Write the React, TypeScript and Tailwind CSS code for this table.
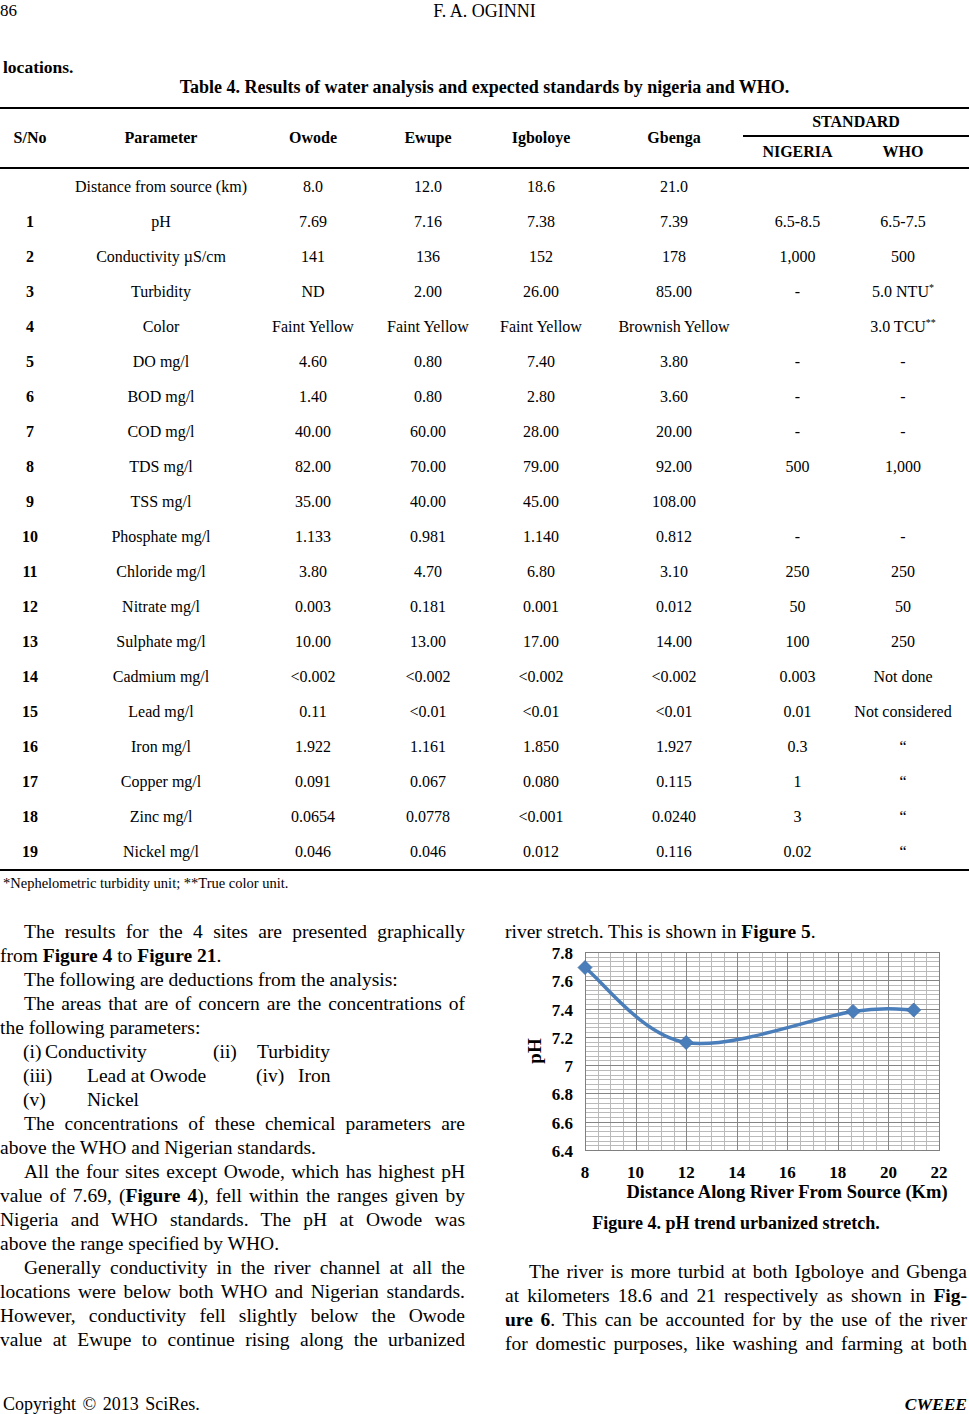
import type { ReactNode } from "react"

const rows: string[][] = [
  ["", "Distance from source (km)", "8.0", "12.0", "18.6", "21.0", "", ""],
  ["1", "pH", "7.69", "7.16", "7.38", "7.39", "6.5-8.5", "6.5-7.5"],
  ["2", "Conductivity µS/cm", "141", "136", "152", "178", "1,000", "500"],
  ["3", "Turbidity", "ND", "2.00", "26.00", "85.00", "-", "NTU"],
  ["4", "Color", "Faint Yellow", "Faint Yellow", "Faint Yellow", "Brownish Yellow", "", "TCU"],
  ["5", "DO mg/l", "4.60", "0.80", "7.40", "3.80", "-", "-"],
  ["6", "BOD mg/l", "1.40", "0.80", "2.80", "3.60", "-", "-"],
  ["7", "COD mg/l", "40.00", "60.00", "28.00", "20.00", "-", "-"],
  ["8", "TDS mg/l", "82.00", "70.00", "79.00", "92.00", "500", "1,000"],
  ["9", "TSS mg/l", "35.00", "40.00", "45.00", "108.00", "", ""],
  ["10", "Phosphate mg/l", "1.133", "0.981", "1.140", "0.812", "-", "-"],
  ["11", "Chloride mg/l", "3.80", "4.70", "6.80", "3.10", "250", "250"],
  ["12", "Nitrate mg/l", "0.003", "0.181", "0.001", "0.012", "50", "50"],
  ["13", "Sulphate mg/l", "10.00", "13.00", "17.00", "14.00", "100", "250"],
  ["14", "Cadmium mg/l", "<0.002", "<0.002", "<0.002", "<0.002", "0.003", "Not done"],
  ["15", "Lead mg/l", "0.11", "<0.01", "<0.01", "<0.01", "0.01", "Not considered"],
  ["16", "Iron mg/l", "1.922", "1.161", "1.850", "1.927", "0.3", "“"],
  ["17", "Copper mg/l", "0.091", "0.067", "0.080", "0.115", "1", "“"],
  ["18", "Zinc mg/l", "0.0654", "0.0778", "<0.001", "0.0240", "3", "“"],
  ["19", "Nickel mg/l", "0.046", "0.046", "0.012", "0.116", "0.02", "“"],
]

const cols = "grid grid-cols-[60px_202px_102px_128px_98px_168px_79px_132px]"

function renderValue(v: string) {
  if (v === "NTU")
    return (
      <span>
        5.0 NTU<span className="relative -top-[6px] text-[10px] leading-none">*</span>
      </span>
    )
  if (v === "TCU")
    return (
      <span>
        3.0 TCU<span className="relative -top-[6px] text-[10px] leading-none">**</span>
      </span>
    )
  return <span>{v}</span>
}

// justified line of running text
function J({ children, indent }: { children: ReactNode; indent?: boolean }) {
  return (
    <div className={indent ? "indent-[24px] text-justify [text-align-last:justify]" : "text-justify [text-align-last:justify]"}>
      {children}
    </div>
  )
}

function L({ children, indent }: { children: ReactNode; indent?: boolean }) {
  return <div className={indent ? "indent-[24px] whitespace-nowrap" : "whitespace-nowrap"}>{children}</div>
}

function PhChart() {
  const X0 = 80
  const X1 = 434
  const Y0 = 8
  const Y1 = 206
  const xs = (km: number) => X0 + ((km - 8) * (X1 - X0)) / 14
  const ys = (ph: number) => Y0 + ((7.8 - ph) * (Y1 - Y0)) / 1.4
  const px = (v: number) => Math.round(v) + 0.5

  const minorV = Array.from({ length: 29 }, (_, i) => 8 + i * 0.5)
  const minorH = Array.from({ length: 43 }, (_, i) => 7.8 - (i * 0.2) / 6)
  const majorV = [8, 10, 12, 14, 16, 18, 20, 22]
  const majorH = [7.8, 7.6, 7.4, 7.2, 7, 6.8, 6.6, 6.4]
  const pts: [number, number][] = [
    [8, 7.69],
    [12, 7.16],
    [18.6, 7.38],
    [21, 7.39],
  ]

  return (
    <svg width="462" height="262" viewBox="0 0 462 262" className="block">
      <rect x={X0} y={Y0} width={X1 - X0} height={Y1 - Y0} fill="#ffffff" />
      {minorV.map((k) => (
        <line key={"mv" + k} x1={px(xs(k))} x2={px(xs(k))} y1={Y0} y2={Y1} stroke="#bababa" strokeWidth="1" />
      ))}
      {minorH.map((p, i) => (
        <line key={"mh" + i} x1={X0} x2={X1} y1={px(ys(p))} y2={px(ys(p))} stroke="#bababa" strokeWidth="1" />
      ))}
      {majorV.map((k) => (
        <line key={"v" + k} x1={px(xs(k))} x2={px(xs(k))} y1={Y0} y2={Y1} stroke="#858585" strokeWidth="1" />
      ))}
      {majorH.map((p) => (
        <line key={"h" + p} x1={X0} x2={X1} y1={px(ys(p))} y2={px(ys(p))} stroke="#858585" strokeWidth="1" />
      ))}
      <rect x={X0 + 0.5} y={Y0 + 0.5} width={X1 - X0} height={Y1 - Y0} fill="none" stroke="#808080" strokeWidth="1" />

      <path
        d="M80,23.56 C96.86,36.05 136.47,91.2 181.14,98.51 C225.81,105.82 310.1,72.82 348.03,67.4 C385.96,61.98 398.6,66.22 408.71,65.99"
        fill="none"
        stroke="#4a7ebb"
        strokeWidth="3.5"
        strokeLinecap="round"
      />
      {pts.map(([k, p]) => {
        const x = xs(k)
        const y = ys(p)
        return (
          <polygon
            key={"pt" + k}
            points={`${x},${y - 7} ${x + 7},${y} ${x},${y + 7} ${x - 7},${y}`}
            fill="#4a7ebb"
            stroke="#3f6fa8"
            strokeWidth="0.8"
          />
        )
      })}

      <g fontFamily="'Liberation Serif', serif" fontWeight="bold" fill="#000">
        {majorH.map((p) => (
          <text key={"yl" + p} x="68" y={ys(p) + 7} fontSize="17" textAnchor="end">
            {p === 7 ? "7" : p.toFixed(1)}
          </text>
        ))}
        {majorV.map((k) => (
          <text key={"xl" + k} x={xs(k)} y="234" fontSize="17" textAnchor="middle">
            {k}
          </text>
        ))}
        <text x="282" y="254" fontSize="18.5" textAnchor="middle">
          Distance Along River From Source (Km)
        </text>
        <text transform="translate(36,107) rotate(-90)" fontSize="19" textAnchor="middle">
          pH
        </text>
      </g>
    </svg>
  )
}

export default function App() {
  return (
    <div className="w-[969px] h-[1414px] flex flex-col overflow-hidden bg-white text-black font-['Liberation_Serif',serif]">
      {/* Running head */}
      <div className="grid grid-cols-[1fr_auto_1fr] h-[22px] leading-[22px] text-[17px]">
        <span>86</span>
        <span className="text-[18px]">F. A. OGINNI</span>
        <span />
      </div>

      <p className="mt-[35px] pl-[3px] leading-[20px] text-[17.5px] font-bold">locations.</p>
      <p className="leading-[20px] text-[18px] font-bold text-center">
        Table 4. Results of water analysis and expected standards by nigeria and WHO.
      </p>

      {/* Table */}
      <div className="mt-[10px] border-t-2 border-black">
        <div className={`${cols} grid-rows-[28px_30px] border-b-2 border-black text-[16px] font-bold`}>
          <div className="row-span-2 flex items-center justify-center">S/No</div>
          <div className="row-span-2 flex items-center justify-center">Parameter</div>
          <div className="row-span-2 flex items-center justify-center">Owode</div>
          <div className="row-span-2 flex items-center justify-center">Ewupe</div>
          <div className="row-span-2 flex items-center justify-center">Igboloye</div>
          <div className="row-span-2 flex items-center justify-center">Gbenga</div>
          <div className="col-span-2 -ml-[15px] flex items-center justify-center border-b-2 border-black">STANDARD</div>
          <div className="flex items-center justify-center">NIGERIA</div>
          <div className="flex items-center justify-center">WHO</div>
        </div>

        <div className="border-b-2 border-black text-[16px]">
          {rows.map((r, i) => (
            <div key={i} className={`${cols} h-[35px] items-center`}>
              {r.map((v, j) => (
                <div key={j} className={j === 0 ? "flex justify-center font-bold" : "flex justify-center whitespace-nowrap"}>
                  {renderValue(v)}
                </div>
              ))}
            </div>
          ))}
        </div>
      </div>

      <p className="mt-[4px] pl-[3px] leading-[17px] text-[14.5px]">*Nephelometric turbidity unit; **True color unit.</p>

      {/* Two-column body */}
      <div className="mt-[28px] flex text-[19.5px] leading-[24px]">
        <div className="w-[465px]">
          <J indent>The results for the 4 sites are presented graphically</J>
          <L>
            from <b>Figure 4</b> to <b>Figure 21</b>.
          </L>
          <L indent>The following are deductions from the analysis:</L>
          <J indent>The areas that are of concern are the concentrations of</J>
          <L>the following parameters:</L>
          <div className="flex pl-[23px]">
            <span className="w-[22px]">(i)</span>
            <span className="w-[168px]">Conductivity</span>
            <span className="w-[44px]">(ii)</span>
            <span>Turbidity</span>
          </div>
          <div className="flex pl-[23px]">
            <span className="w-[64px]">(iii)</span>
            <span className="w-[169px]">Lead at Owode</span>
            <span className="w-[42px]">(iv)</span>
            <span>Iron</span>
          </div>
          <div className="flex pl-[23px]">
            <span className="w-[64px]">(v)</span>
            <span>Nickel</span>
          </div>
          <J indent>The concentrations of these chemical parameters are</J>
          <L>above the WHO and Nigerian standards.</L>
          <J indent>All the four sites except Owode, which has highest pH</J>
          <J>
            value of 7.69, (<b>Figure 4</b>), fell within the ranges given by
          </J>
          <J>Nigeria and WHO standards. The pH at Owode was</J>
          <L>above the range specified by WHO.</L>
          <J indent>Generally conductivity in the river channel at all the</J>
          <J>locations were below both WHO and Nigerian standards.</J>
          <J>However, conductivity fell slightly below the Owode</J>
          <J>value at Ewupe to continue rising along the urbanized</J>
        </div>

        <div className="ml-[40px] w-[462px]">
          <L>
            river stretch. This is shown in <b>Figure 5</b>.
          </L>
          <PhChart />
          <p className="mt-[7px] text-center text-[18px] leading-[20px] font-bold">Figure 4. pH trend urbanized stretch.</p>
          <div className="mt-[27px]">
            <J indent>The river is more turbid at both Igboloye and Gbenga</J>
            <J>
              at kilometers 18.6 and 21 respectively as shown in <b>Fig-</b>
            </J>
            <J>
              <b>ure 6</b>. This can be accounted for by the use of the river
            </J>
            <J>for domestic purposes, like washing and farming at both</J>
          </div>
        </div>
      </div>

      {/* Footer */}
      <div className="mt-auto flex h-[20px] justify-between leading-[20px]">
        <span className="pl-[3px] text-[18px] [word-spacing:2px]">Copyright © 2013 SciRes.</span>
        <span className="pr-[2px] text-[17.5px] font-bold italic">CWEEE</span>
      </div>
    </div>
  )
}
